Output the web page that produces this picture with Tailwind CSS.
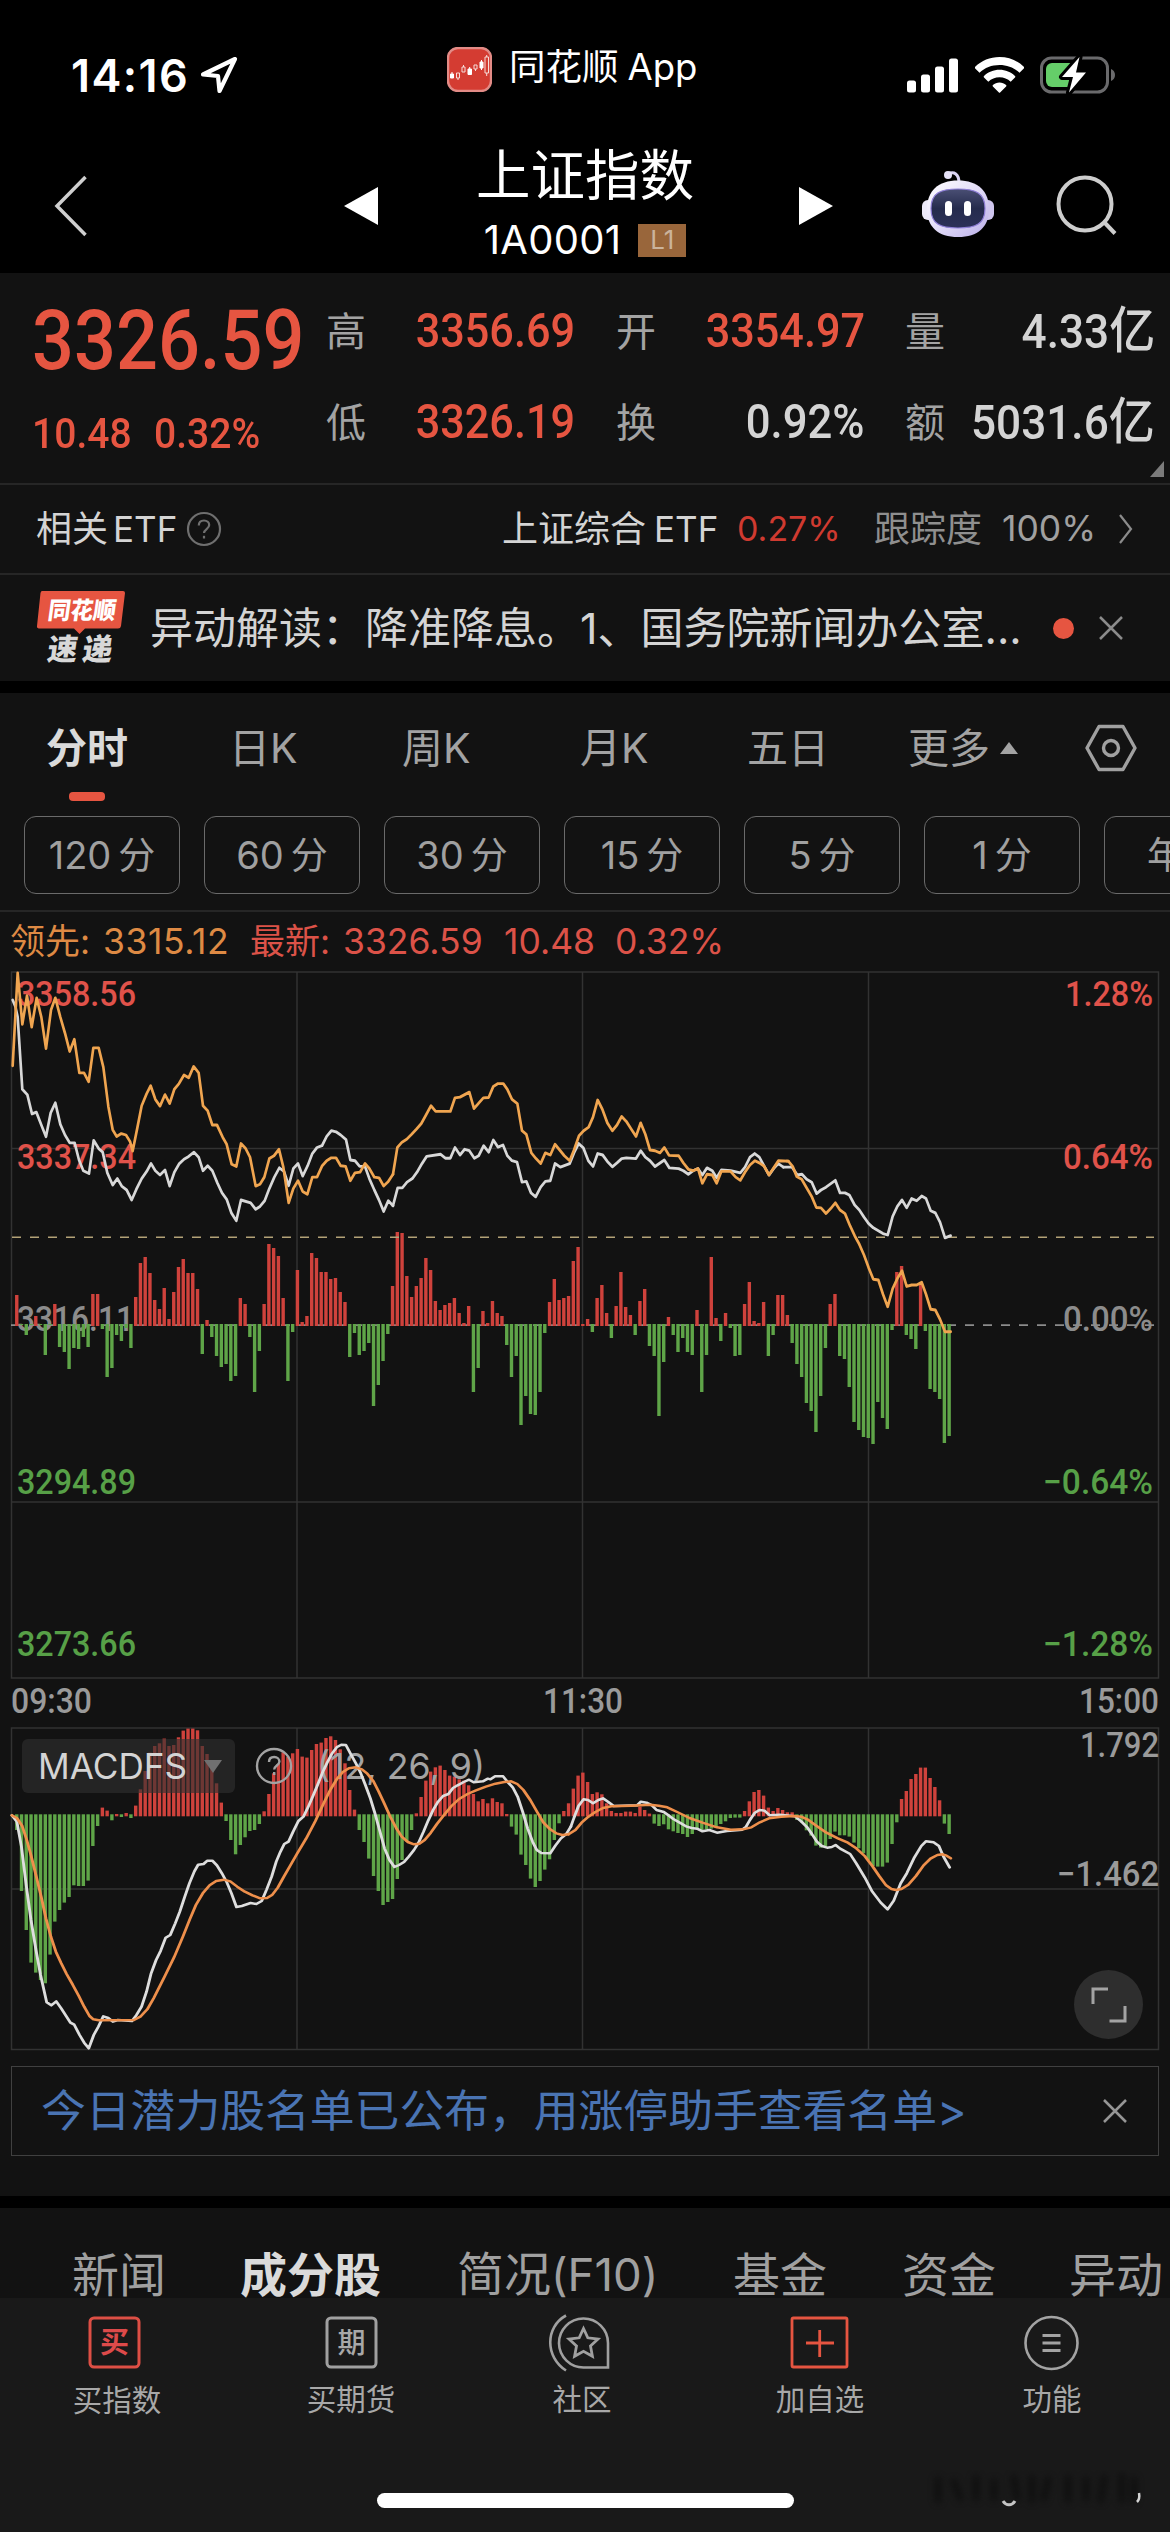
<!DOCTYPE html>
<html lang="zh-CN">
<head>
    <meta charset="UTF-8">
    <meta name="viewport" content="width=device-width, initial-scale=1.0">
    <title>上证指数 1A0001</title>
    <script src="https://cdn.jsdelivr.net/npm/@tailwindcss/browser@4"></script>
</head>
<body class="bg-black font-['Inter','Noto_Sans_CJK_SC',sans-serif] text-[#d4d4d4] antialiased">

<div class="w-[1170px] h-[2532px] flex flex-col overflow-hidden whitespace-nowrap leading-none">

    <!-- Status bar + navigation -->
    <header class="h-[273px] shrink-0 bg-black text-white">
        <div class="h-[138px] pt-[12px] flex items-center">
            <div class="w-[447px] pl-[71px] flex items-center gap-[12px]">
                <span class="text-[45px] font-semibold tracking-[1.400px] w-[117px]">14:16</span>
                <svg class="w-[38px] h-[38px]" viewBox="0 0 38 38" fill="none" stroke="#fff" stroke-width="4.2" stroke-linejoin="round"><path d="M35 3 3 18.5l15 1.5 1.5 15z"/></svg>
            </div>
            <div class="w-[460px] flex items-center gap-[17px] -mt-[12px]">
                <svg class="w-[45px] h-[45px]" viewBox="0 0 45 45">
                    <rect x="1" y="1" width="43" height="43" rx="10" fill="#d43c32" stroke="#e28b86" stroke-width="2.4"/>
                    <g fill="#fff" stroke="#fff" stroke-width="1"><path d="M3.500 27h3v4h-3zM21 22h3.500v5.500H21zM33 15h3v6h-3z"/><path d="M5 25v2M22.700 20v2M34.500 13v2M34.500 21v2"/></g>
                    <g fill="none" stroke="#f6dcd8" stroke-width="1"><path d="M9.500 26h3v5h-3zM15 20h3v5h-3zM27 18h3v4h-3zM38 10h3.500v16H38zM16.500 18v2M11 31v2M28.500 22v2M39.700 8v2M39.700 26v3"/></g>
                </svg>
                <span class="text-[36.500px] -mt-[3px]">同花顺<span class="ml-[9px]">App</span></span>
            </div>
            <div class="flex items-center gap-[16px]">
                <svg class="w-[52px] h-[35px]" viewBox="0 0 52 35" fill="#fff"><rect x="0" y="22.500" width="9" height="12" rx="2.500"/><rect x="14" y="16.500" width="9" height="18" rx="2.500"/><rect x="28" y="8.500" width="9" height="26" rx="2.500"/><rect x="42" y="0.500" width="9" height="34" rx="2.500"/></svg>
                <svg class="w-[49px] h-[36px]" viewBox="0 0 49 36" fill="#fff"><path d="M24.500 0C34 0 42.500 3.600 48.800 9.800a1.200 1.200 0 0 1 0 1.700l-4.300 4.300C39.300 10.700 32.300 8 24.500 8S9.700 10.700 4.500 15.800L.2 11.500a1.200 1.200 0 0 1 0-1.700C6.500 3.600 15 0 24.500 0z"/><path d="M24.500 12.700c6 0 11.400 2.300 15.500 6.200.5.500.5 1 0 1.600l-4.300 4.200c-3-2.800-6.900-4.400-11.200-4.400s-8.200 1.600-11.200 4.400L9 20.500c-.5-.6-.5-1.100 0-1.600 4.100-3.900 9.500-6.200 15.500-6.200z"/><path d="M24.500 25.500c2.500 0 4.800.9 6.600 2.400.5.500.5 1 0 1.500l-6 6.100c-.4.400-.8.400-1.200 0l-6-6.100c-.5-.5-.5-1 0-1.500 1.800-1.500 4.100-2.400 6.600-2.400z"/></svg>
                <svg class="w-[76px] h-[38px]" viewBox="0 0 76 38"><rect x="1.500" y="2" width="66" height="34" rx="10" fill="none" stroke="#6a6a6c" stroke-width="3"/><path d="M71 13c2.500 1 4 3.200 4 6s-1.500 5-4 6z" fill="#6a6a6c"/><path d="M12 7h24v24H12a6 6 0 0 1-6-6V13a6 6 0 0 1 6-6z" fill="#65ce69"/><path d="M39.500 1 22 21h11l-4 15.500L46 16.500H36z" fill="#fff" stroke="#000" stroke-width="6" stroke-linejoin="round" paint-order="stroke"/></svg>
            </div>
        </div>

        <div class="h-[135px] flex items-center">
            <svg class="w-[36px] h-[62px] ml-[53px] shrink-0" viewBox="0 0 36 62" fill="none" stroke="#cfcfcf" stroke-width="3.500"><path d="M32.500 2 4 31l28.500 29"/></svg>
            <svg class="w-[35px] h-[38px] ml-[255px] shrink-0" viewBox="0 0 35 38" fill="#fff"><path d="M0 19 34 0v38z"/></svg>
            <div class="w-[420px] pr-[8px] flex flex-col items-center shrink-0">
                <h1 class="text-[54.500px] leading-[66px] -mt-[6px] mb-[9px]">上证指数</h1>
                <div class="h-[46px] flex items-center gap-[17px]">
                    <span class="text-[40px] tracking-[0.300px]">1A0001</span>
                    <span class="w-[48px] h-[33px] bg-[#99663b] text-[#cbb39c] text-[26px] flex items-center justify-center">L1</span>
                </div>
            </div>
            <svg class="w-[35px] h-[38px] shrink-0" viewBox="0 0 35 38" fill="#fff"><path d="M34 19 0 0v38z"/></svg>
            <svg class="w-[74px] h-[70px] ml-[87px] mb-[3px] shrink-0" viewBox="0 0 74 70">
                <defs>
                    <linearGradient id="shell" x1="0" y1="0" x2="1" y2="1"><stop offset="0" stop-color="#fff"/><stop offset=".5" stop-color="#e2dcf8"/><stop offset="1" stop-color="#b9aee8"/></linearGradient>
                    <linearGradient id="face" x1="0" y1="0" x2="0" y2="1"><stop offset="0" stop-color="#4a4f74"/><stop offset=".5" stop-color="#252b4d"/><stop offset="1" stop-color="#2c3158"/></linearGradient>
                </defs>
                <path d="M27 5c6-3 11 0 11 9" fill="none" stroke="#d9d3f2" stroke-width="3"/><circle cx="27" cy="6" r="4" fill="#e6e2f7"/>
                <rect x="1" y="31" width="14" height="20" rx="6" fill="#ece9f8"/><rect x="59" y="31" width="14" height="20" rx="6" fill="#cfc6ee"/>
                <path d="M37 11.500C57 11.500 68 22 68 40S57 68 37 68 6 58 6 40s11-28.500 31-28.500z" fill="url(#shell)"/>
                <path d="M37 20c18 0 27 4 27 19.500S55 59 37 59 10 55 10 39.500 19 20 37 20z" fill="url(#face)" stroke="#8f7fd8" stroke-width="1.200"/>
                <rect x="24" y="32" width="7" height="15" rx="3.500" fill="#fff"/><rect x="43" y="32" width="7" height="15" rx="3.500" fill="#fff"/>
            </svg>
            <svg class="w-[62px] h-[62px] ml-[61px] shrink-0" viewBox="0 0 62 62" fill="none" stroke="#cdcdcd" stroke-width="4"><circle cx="29" cy="29" r="26.500"/><path d="m48 47 11 11.500"/></svg>
        </div>
    </header>

    <!-- Quote summary -->
    <section class="h-[210px] shrink-0 bg-[#121212] flex relative">
        <div class="w-[326px] pl-[32px] text-[#e65541] font-['Roboto'] font-medium">
            <div class="mt-[27px] text-[83px] leading-[82px] w-[300px] origin-left scale-x-[0.890]">3326.59</div>
            <div class="mt-[31px] flex text-[42px] leading-[42px] gap-[24px] origin-left scale-x-[0.930]"><span>10.48</span><span>0.32%</span></div>
        </div>
        <div class="flex-1 grid grid-cols-[290px_289px_250px] grid-rows-[91px_91px] pt-[12px] text-[48px] font-['Roboto','Noto_Sans_CJK_SC',sans-serif] font-medium">
            <div class="flex items-center justify-between pr-[41px]"><span class="text-[40px] font-normal text-[#a3a3a3] pt-[4px]">高</span><span class="text-[#e65541] origin-right scale-x-[0.900]">3356.69</span></div>
            <div class="flex items-center justify-between pr-[40px]"><span class="text-[40px] font-normal text-[#a3a3a3] pt-[4px]">开</span><span class="text-[#e65541] origin-right scale-x-[0.900]">3354.97</span></div>
            <div class="flex items-center justify-between"><span class="text-[40px] font-normal text-[#a3a3a3] pt-[4px]">量</span><span class="origin-right scale-x-[0.920]">4.33<span class="text-[50px]">亿</span></span></div>
            <div class="flex items-center justify-between pr-[41px]"><span class="text-[40px] font-normal text-[#a3a3a3] pt-[4px]">低</span><span class="text-[#e65541] origin-right scale-x-[0.900]">3326.19</span></div>
            <div class="flex items-center justify-between pr-[40px]"><span class="text-[40px] font-normal text-[#a3a3a3] pt-[4px]">换</span><span class="origin-right scale-x-[0.910]">0.92%</span></div>
            <div class="flex items-center justify-between"><span class="text-[40px] font-normal text-[#a3a3a3] pt-[4px]">额</span><span class="origin-right scale-x-[0.920]">5031.6<span class="text-[50px]">亿</span></span></div>
        </div>
        <svg class="absolute right-[6px] bottom-[6px] w-[14px] h-[16px]" viewBox="0 0 14 16" fill="#7b7b7b"><path d="M14 0v16H0z"/></svg>
    </section>

    <!-- Related ETF -->
    <section class="h-[90px] shrink-0 bg-[#121212] border-t-2 border-[#262626] flex items-center text-[34px] pl-[36px]">
        <span class="w-[150px]"><span class="text-[36px]">相关</span><span class="ml-[5px] text-[35px]">ETF</span></span>
        <svg class="w-[36px] h-[36px]" viewBox="0 0 36 36" fill="none" stroke="#6f6f6f" stroke-width="2.200"><circle cx="18" cy="18" r="16"/><path d="M12.800 14.500c0-3.200 2.200-5 5.200-5s5.200 1.900 5.200 4.600c0 3.900-5.200 4-5.200 8"/><path d="M18 24.800v2.700"/></svg>
        <span class="ml-[280px] w-[235px]"><span class="text-[36px]">上证综合</span><span class="ml-[8px] text-[35px]">ETF</span></span>
        <span class="w-[137px] text-[#cf3a30]">0.27%</span>
        <span class="w-[128px] text-[36px] text-[#8f8f8f]">跟踪度</span>
        <span class="w-[117px] text-[35.500px] text-[#a0a0a0]">100%</span>
        <svg class="w-[14px] h-[30px]" viewBox="0 0 14 30" fill="none" stroke="#8b8b8b" stroke-width="2.200"><path d="m1 1 11 14L1 29"/></svg>
    </section>

    <!-- News ticker -->
    <section class="h-[108px] shrink-0 bg-[#121212] border-t-2 border-[#262626] flex items-center">
        <svg class="w-[90px] h-[76px] ml-[36px] overflow-visible" viewBox="0 0 90 76">
            <path d="M6 1h81a2 2 0 0 1 2 2l-4 33a3 3 0 0 1-3 2.500H49L43.500 44 38 38.500H3A2 2 0 0 1 1 36L4.500 3Q5 1 6 1z" fill="#e65541"/>
            <g font-family="'Noto Sans CJK SC',sans-serif" font-weight="900" fill="#fff">
                <text x="15" y="29" font-size="24" textLength="68" lengthAdjust="spacingAndGlyphs" transform="skewX(-8)">同花顺</text>
                <text x="20" y="70" font-size="30" textLength="65" lengthAdjust="spacing" fill="#d8d8d8" transform="skewX(-8)">速递</text>
            </g>
        </svg>
        <span class="ml-[24px] w-[903px] text-[43px]">异动解读：降准降息。1、国务院新闻办公室...</span>
        <span class="w-[21px] h-[21px] rounded-full bg-[#e65541]"></span>
        <svg class="ml-[25px] w-[24px] h-[24px]" viewBox="0 0 24 24" stroke="#8b8b8b" stroke-width="2.500"><path d="m1 1 22 22M23 1 1 23"/></svg>
    </section>

    <!-- Period tabs -->
    <nav class="mt-[12px] h-[123px] shrink-0 bg-[#121212] relative text-[41px] text-[#a3a3a3]">
        <div class="h-[110px] flex items-center pl-[46px]">
            <span class="w-[183px] font-bold text-[#dadada]">分时</span>
            <span class="w-[173px]">日K</span>
            <span class="w-[178px]">周K</span>
            <span class="w-[167px]">月K</span>
            <span class="w-[161px]">五日</span>
            <span class="w-[92px]">更多</span>
            <svg class="w-[18px] h-[12px]" viewBox="0 0 18 12" fill="#a3a3a3"><path d="M9 0 18 12H0z"/></svg>
            <svg class="w-[52px] h-[48px] ml-[67px]" viewBox="0 0 52 48" fill="none" stroke="#a0a0a0" stroke-width="3.400"><path d="M14 2.500h24L50 24 38 45.500H14L2 24z" stroke-linejoin="round"/><circle cx="26" cy="24" r="7.500"/></svg>
        </div>
        <span class="absolute left-[69px] top-[99px] w-[36px] h-[9px] rounded-[4px] bg-[#e65541]"></span>
    </nav>

    <!-- Minute intervals -->
    <div class="h-[94px] shrink-0 bg-[#121212] flex gap-[24px] pl-[24px] text-[37px] text-[#a0a0a0]">
        <span class="w-[156px] h-[78px] shrink-0 border-[1.500px] border-[#6a6a6a] rounded-[12px] flex items-center justify-center gap-[7px] text-[38px]">120<i class="not-italic text-[37px]">分</i></span>
        <span class="w-[156px] h-[78px] shrink-0 border-[1.500px] border-[#6a6a6a] rounded-[12px] flex items-center justify-center gap-[7px] text-[38px]">60<i class="not-italic text-[37px]">分</i></span>
        <span class="w-[156px] h-[78px] shrink-0 border-[1.500px] border-[#6a6a6a] rounded-[12px] flex items-center justify-center gap-[7px] text-[38px]">30<i class="not-italic text-[37px]">分</i></span>
        <span class="w-[156px] h-[78px] shrink-0 border-[1.500px] border-[#6a6a6a] rounded-[12px] flex items-center justify-center gap-[7px] text-[38px]">15<i class="not-italic text-[37px]">分</i></span>
        <span class="w-[156px] h-[78px] shrink-0 border-[1.500px] border-[#6a6a6a] rounded-[12px] flex items-center justify-center gap-[7px] text-[38px]">5<i class="not-italic text-[37px]">分</i></span>
        <span class="w-[156px] h-[78px] shrink-0 border-[1.500px] border-[#6a6a6a] rounded-[12px] flex items-center justify-center gap-[7px] text-[38px]">1<i class="not-italic text-[37px]">分</i></span>
        <span class="w-[156px] h-[78px] shrink-0 border-[1.500px] border-[#6a6a6a] rounded-[12px] flex items-center pl-[42px]">年</span>
    </div>

    <!-- Chart legend -->
    <div class="h-[50px] shrink-0 bg-[#121212] border-t-2 border-[#262626] flex items-center pt-[11px] pl-[10px] text-[35.500px] text-[#dc5248]">
        <span class="w-[93px] text-[35px] text-[#de8a44]">领先:</span>
        <span class="w-[147px] tracking-[0.600px] text-[#de8a44]">3315.12</span>
        <span class="w-[93px] text-[35px]">最新:</span>
        <span class="w-[161px]">3326.59</span>
        <span class="w-[111px]">10.48</span>
        <span>0.32%</span>
    </div>

    <!-- Intraday chart, y axis in screen pixels from 960 -->
    <svg class="w-[1170px] h-[760px] shrink-0 bg-[#121212] overflow-visible" viewBox="0 960 1170 760" font-family="Roboto,sans-serif" font-size="35" font-weight="500">
        <g fill="none" stroke="#323232" stroke-width="1.500">
            <path d="M11.500 972H1158.500V1678H11.500zM11 1148.500H1159M11 1502H1159M297 972V1678M582.500 972V1678M868.500 972V1678"/>
        </g>
        <path d="M11 1325.200H1154" stroke="#8c8c8c" stroke-width="1.700" stroke-dasharray="9 9"/>
        <g fill="#e0524a">
            <text x="17" y="1006" textLength="119" lengthAdjust="spacingAndGlyphs">3358.56</text>
            <text x="17" y="1168.500" textLength="119" lengthAdjust="spacingAndGlyphs">3337.34</text>
            <text x="1153" y="1006" text-anchor="end" textLength="88" lengthAdjust="spacingAndGlyphs">1.28%</text>
            <text x="1153" y="1168.500" text-anchor="end" textLength="90" lengthAdjust="spacingAndGlyphs">0.64%</text>
        </g>
        <g fill="#8c8c8c">
            <text x="17" y="1331" textLength="117" lengthAdjust="spacingAndGlyphs">3316.11</text>
            <text x="1153" y="1331" text-anchor="end" textLength="90" lengthAdjust="spacingAndGlyphs">0.00%</text>
        </g>
        <g id="volumeBars"></g>
        <path d="M12 1237.200H1154" stroke="#b3a277" stroke-width="1.500" stroke-dasharray="9 9"/>
        <svg x="0" y="960" width="1170" height="720" viewBox="0 0 3510 2016" preserveAspectRatio="none" fill="none" stroke-linejoin="round" stroke-linecap="round" stroke-width="8">
            <g stroke="#d8d8d8">
                <polyline points="38,112 46,130 53,160 67,362 82,377 96,431 109,426 124,462 138,495 152,428 166,400 181,460 195,490 209,512 224,512 237,560 250,590 267,598 281,505 296,528 308,538 322,596 338,630 352,612 366,634 380,644 395,672 409,642 425,612 440,592 453,570 466,590 480,602 495,588 509,633 523,594 538,570 552,558 566,550 582,538 596,552 609,590 623,576 637,590 652,624 666,652 680,670 694,708 709,730 723,672 752,680 767,698 780,690 794,674 808,640 823,608 838,582 852,592 866,632 880,584 894,570 908,605 923,576 937,542 951,525 966,520 980,494 994,478 1008,481 1022,490 1038,503 1051,560 1065,562 1079,578 1095,578 1108,612 1123,644 1137,672 1151,704 1165,674 1179,688"/>
                <polyline transform="translate(1170)" points="9,688 23,638 37,638 51,622 67,612 81,594 96,570 110,550 152,544 166,555 181,555 195,525 210,546 224,530 238,534 253,555 266,548 281,520 296,538 310,504 324,524 339,518 352,548 366,562 381,566 396,622 409,620 423,652 437,663 452,636 466,620 481,618 495,570 511,580 539,570 552,540 566,514 580,526 595,562 609,578 623,542 638,546 652,564 667,579 681,568 695,556 709,554 738,556 752,534 766,552 780,562 795,578 823,560 838,582 866,584 880,590 895,600 909,590 924,584 937,602 951,582 967,590 980,610 994,588 1022,590 1051,596 1065,580 1080,552 1094,542 1108,552 1123,578 1137,602 1151,584 1165,570 1180,580"/>
                <polyline transform="translate(2340)" points="10,580 36,580 52,602 66,600 80,614 95,622 110,654 123,644 138,636 166,617 180,652 195,652 208,658 224,686 238,700 252,720 266,738 280,750 295,758 309,766 323,770 338,718 352,690 366,672 380,694 395,668 410,674 425,661 438,668 452,702 466,708 480,734 495,778 512,772"/>
            </g>
            <g stroke="#f0a550">
                <polyline points="38,296 53,36 67,180 81,100 95,188 110,106 124,160 138,248 153,140 166,106 181,160 195,205 209,256 223,222 238,316 252,316 266,341 280,246 296,246 310,300 325,410 338,475 350,494 364,486 378,490 390,508 398,535 412,470 425,408 440,374 452,352 466,390 480,409 495,377 509,402 523,362 537,346 552,322 566,330 581,298 596,316 609,408 623,422 637,462 651,462 668,496 680,516 695,572 709,578 723,514 737,528 750,552 767,633 780,628 793,608 808,556 822,548 837,530 850,580 866,680 880,640 894,618 908,648 922,656 937,608 951,608 966,577 980,562 994,554 1008,554 1022,576 1037,578 1051,618 1065,596 1080,594 1095,570 1108,584 1123,608 1137,610 1151,633 1165,620 1179,600"/>
                <polyline transform="translate(1170)" points="9,600 22,525 36,510 50,502 65,488 79,474 94,458 108,434 123,408 137,424 181,424 195,386 210,384 238,370 252,416 280,386 296,385 310,354 324,346 340,346 352,362 366,390 382,402 396,478 409,488 424,540 438,556 452,570 466,540 481,546 495,516 509,532 523,548 539,562 552,532 567,492 581,478 596,468 609,440 623,392 637,418 652,456 667,478 681,462 695,438 709,452 724,474 738,494 752,456 766,488 780,532 795,534 810,540 823,525 837,547 866,548 880,568 895,586 909,590 924,584 937,625 951,600 967,602 980,625 994,592 1022,592 1037,608 1051,617 1065,594 1080,574 1095,562 1108,568 1123,578 1137,602 1151,582 1165,562 1195,563"/>
                <polyline transform="translate(2340)" points="20,563 25,563 38,578 50,606 65,614 81,640 95,662 109,693 123,694 138,710 152,696 166,680 180,700 195,710 210,744 224,772 238,796 252,826 266,862 280,894 295,896 309,936 323,971 338,920 352,892 366,870 380,914 395,910 410,910 425,902 438,936 452,978 466,980 480,1006 495,1041 512,1041"/>
            </g>
        </svg>
        <g fill="#57a047">
            <text x="17" y="1493.500" textLength="119" lengthAdjust="spacingAndGlyphs">3294.89</text>
            <text x="17" y="1656" textLength="119" lengthAdjust="spacingAndGlyphs">3273.66</text>
            <text x="1153" y="1493.500" text-anchor="end" textLength="110" lengthAdjust="spacingAndGlyphs">−0.64%</text>
            <text x="1153" y="1656" text-anchor="end" textLength="110" lengthAdjust="spacingAndGlyphs">−1.28%</text>
        </g>
        <g fill="#9a9a9a">
            <text x="11" y="1713" textLength="81" lengthAdjust="spacingAndGlyphs">09:30</text>
            <text x="543" y="1713" textLength="80" lengthAdjust="spacingAndGlyphs">11:30</text>
            <text x="1159" y="1713" text-anchor="end" textLength="80" lengthAdjust="spacingAndGlyphs">15:00</text>
        </g>
    </svg>

    <!-- MACD indicator -->
    <div class="h-[340px] shrink-0 bg-[#121212] relative">
        <svg class="block w-[1170px] h-[340px]" viewBox="0 1720 1170 340" font-family="Roboto,sans-serif" font-size="35" font-weight="500">
            <path d="M11.500 1728H1158.500V2049.500H11.500zM11 1889H1159M297 1728V2049M582.500 1728V2049M868.500 1728V2049" fill="none" stroke="#323232" stroke-width="1.500"/>
            <g id="macdBars"></g>
            <rect x="22" y="1739" width="213" height="54" rx="6" fill="#313131" fill-opacity=".62"/>
            <g fill="#9a9a9a">
                <text x="1159" y="1757" text-anchor="end" textLength="79" lengthAdjust="spacingAndGlyphs">1.792</text>
                <text x="1159" y="1886" text-anchor="end" textLength="102" lengthAdjust="spacingAndGlyphs">−1.462</text>
            </g>
            <g font-family="Inter,sans-serif" font-weight="400">
                <text x="38" y="1779" font-size="35" fill="#d4d4d4" textLength="149" lengthAdjust="spacingAndGlyphs">MACDFS</text>
                <text x="317" y="1779" font-size="36" fill="#a3a3a3" textLength="168" lengthAdjust="spacingAndGlyphs">(12, 26, 9)</text>
            </g>
            <path d="M204 1760h18l-9 13z" fill="#707070"/>
            <g fill="none" stroke="#a3a3a3" stroke-width="2.400"><circle cx="274" cy="1766" r="17"/><path d="M269 1762c0-3.200 2.200-5 5.200-5s5.200 1.900 5.200 4.600c0 3.900-5.200 4-5.200 8M274.200 1772v3"/></g>
            <svg x="0" y="1660" width="1170" height="400" viewBox="0 0 3058 1200" preserveAspectRatio="none" fill="none" stroke-linejoin="round" stroke-linecap="round" stroke-width="7.500">
                <g stroke="#dedede">
                    <polyline points="31,466 44,485 56,560 69,680 81,780 94,870 106,945 122,1027 134,1036 147,1024 160,1045 184,1088 194,1094 208,1125 220,1148 232,1165 245,1125 257,1100 270,1069 283,1074 295,1085 308,1080 345,1083 356,1066 370,1040 383,995 395,940 408,900 420,872 433,833 445,825 458,790 470,755 483,710 495,670 508,634 518,614 532,612 542,602 555,602 567,616 580,640 592,665 605,700 618,741 632,738 655,729 670,732 684,723 697,688 710,650 722,605 733,575 743,552 754,545 766,515 780,483 793,470 805,442 818,408 830,375 842,340 855,308 868,280 880,262 892,254 904,255 918,285 930,310 943,340 955,375 968,415 980,460 992,510 1005,565 1018,600 1031,621 1043,615 1056,606 1068,590 1082,570 1094,548 1107,515 1119,482 1132,450 1145,425 1158,408 1172,402 1184,384 1196,376 1212,366 1226,359 1238,367 1262,364 1275,356 1282,358 1294,349 1315,349 1326,365 1340,382 1353,410 1366,455 1379,505 1392,545 1403,570 1415,579 1438,580 1452,556 1466,535 1480,522 1492,500"/>
                    <polyline transform="translate(1490)" points="2,500 10,474 22,438 35,418 47,420 60,430 74,420 86,415 100,426 114,438 175,436 185,425 200,428 214,436 226,450 245,456 257,466 270,477 290,490 305,500 318,504 332,506 346,514 364,510 384,518 410,513 450,509 460,500 470,480 483,458 495,450 508,452 522,466 548,464 588,469 604,484 620,502 632,522 645,545 658,558 672,563 684,561 694,555 706,566 732,582 748,610 770,652 790,695 812,728 830,748 846,722 864,670 880,640 900,592 918,558 930,544 950,547 964,558 976,590 992,622"/>
                </g>
                <g stroke="#ee8f4b">
                    <polyline points="31,466 44,474 58,498 70,540 82,590 95,650 108,712 120,775 133,830 146,875 160,910 174,942 190,974 206,1008 220,1040 234,1068 244,1078 258,1081 350,1080 368,1069 385,1048 402,1014 430,950 455,892 478,830 496,778 512,735 530,700 548,676 565,663 585,659 602,664 620,680 640,695 660,706 680,715 698,714 712,704 726,683 742,650 758,618 776,582 800,536 824,484 846,430 864,388 880,358 896,336 912,325 930,322 946,328 960,341 976,364 990,395 1005,432 1020,470 1036,505 1050,530 1066,546 1082,553 1096,551 1110,540 1126,518 1142,492 1160,466 1180,438 1200,417 1222,402 1244,391 1270,380 1295,371 1318,366 1336,364 1352,372 1368,390 1386,420 1404,456 1420,487 1438,508 1454,520 1470,525 1486,523"/>
                    <polyline transform="translate(1490)" points="-4,523 14,510 30,488 48,470 66,456 86,444 108,439 160,437 210,434 232,437 254,442 280,456 312,474 346,488 384,502 420,509 452,508 474,502 496,487 520,475 552,470 586,468 604,470 620,478 640,494 670,518 700,535 726,548 748,565 770,588 790,618 808,648 826,676 840,687 852,690 866,687 884,674 904,648 924,616 942,596 960,585 974,583 984,587 995,595"/>
                </g>
            </svg>
        </svg>
        <button class="absolute left-[1074px] top-[250px] w-[69px] h-[69px] rounded-full bg-[#2e2e2e] flex items-center justify-center">
            <svg class="w-[36px] h-[36px]" viewBox="0 0 36 36" fill="none" stroke="#a3a3a3" stroke-width="3"><path d="M2 17V2h15M34 19v15H18.500"/></svg>
        </button>
    </div>

    <!-- Promo link -->
    <section class="h-[136px] shrink-0 bg-[#121212] pt-[6px] px-[11px]">
        <div class="h-[90px] border-[1.500px] border-[#404040] flex items-center pl-[29px] text-[#4a74b3]">
            <span class="w-[1062px] shrink-0 text-[44.800px]">今日潜力股名单已公布，用涨停助手查看名单&gt;</span>
            <svg class="w-[24px] h-[24px] shrink-0" viewBox="0 0 24 24" stroke="#969696" stroke-width="2.500"><path d="m1 1 22 22M23 1 1 23"/></svg>
        </div>
    </section>

    <!-- Detail tabs -->
    <nav class="mt-[12px] h-[90px] shrink-0 bg-[#121212] flex items-center pt-[42px] pl-[72px] text-[47px] text-[#a0a0a0]">
        <span class="w-[168px] shrink-0">新闻</span>
        <span class="w-[217px] shrink-0 font-bold text-[#dadada]">成分股</span>
        <span class="w-[276px] shrink-0">简况<span class="text-[45.500px]">(F10)</span></span>
        <span class="w-[169px] shrink-0">基金</span>
        <span class="w-[167px] shrink-0">资金</span>
        <span class="shrink-0">异动</span>
    </nav>

    <!-- Bottom bar -->
    <footer class="h-[234px] shrink-0 bg-[#191919] relative text-[29.500px] text-[#a8a8a8]">
        <div class="flex pt-[15px] pl-[34px]">
            <div class="w-[166px] flex flex-col items-center gap-[12px]">
                <svg class="w-[60px] h-[60px] -ml-[6px]" viewBox="0 0 60 60"><rect x="6" y="5" width="49" height="49" rx="4" fill="none" stroke="#dd4f45" stroke-width="3"/><text x="30.500" y="40" font-size="29" font-weight="700" text-anchor="middle" fill="#dd4a4a" font-family="'Noto Sans CJK SC',sans-serif">买</text></svg>
                <span class="mt-px">买指数</span>
            </div>
            <div class="ml-[68px] w-[166px] flex flex-col items-center gap-[12px]">
                <svg class="w-[60px] h-[60px]" viewBox="0 0 60 60"><rect x="6" y="5" width="49" height="49" rx="4" fill="none" stroke="#a0a0a0" stroke-width="3"/><text x="30.500" y="40" font-size="28" font-weight="500" text-anchor="middle" fill="#a8a8a8" font-family="'Noto Sans CJK SC',sans-serif">期</text></svg>
                <span>买期货</span>
            </div>
            <div class="ml-[65px] w-[166px] flex flex-col items-center gap-[12px]">
                <svg class="w-[62px] h-[60px] -ml-[6px]" viewBox="0 0 62 60" fill="none" stroke="#a0a0a0" stroke-width="2.600"><path d="M18 2.500C-3 14-3 44 18 57.500"/><path d="M36 54.500h24V30a24.500 24.500 0 1 0-24 24.500z"/><path d="m35.500 15.500 4.300 9.300 10.200 1.300-7.500 7 1.900 10.200-8.900-5-8.900 5 1.900-10.200-7.500-7 10.200-1.300z" stroke-width="2.800"/></svg>
                <span>社区</span>
            </div>
            <div class="ml-[72px] w-[166px] flex flex-col items-center gap-[12px]">
                <svg class="w-[60px] h-[60px]" viewBox="0 0 60 60" fill="none" stroke="#e65541" stroke-width="2.800"><rect x="2" y="5" width="55" height="49" rx="1.500"/><path d="M16 30h28M29.700 17v27"/></svg>
                <span>加自选</span>
            </div>
            <div class="ml-[66px] w-[166px] flex flex-col items-center gap-[12px]">
                <svg class="w-[60px] h-[60px]" viewBox="0 0 60 60" fill="none" stroke="#a3a3a3" stroke-width="2.600"><circle cx="29.500" cy="30" r="26"/><path d="M20.500 22.500h18M20.500 30h18M20.500 37.500h18" stroke-width="3"/></svg>
                <span>功能</span>
            </div>
        </div>
        <span class="absolute left-[377px] top-[195px] w-[417px] h-[15px] rounded-full bg-white"></span>
        <!-- erased corner mark -->
        <svg class="absolute left-[926px] top-[172px] w-[220px] h-[42px]" viewBox="0 0 220 42">
            <g class="blur-[3px]" fill="none" stroke="#0e0e0e" stroke-width="7" opacity=".8" stroke-linecap="round"><path d="M12 10v20M28 12l6 16M50 8v20M68 12v16M88 8l3 20M106 8v22M122 10l-4 18M142 8v22M160 10v18M178 8l-3 22M196 6v24M208 10v20"/></g>
            <path d="M77 31c3 5 9 5 12 0" fill="none" stroke="#c4c4c4" stroke-width="3"/><path d="M213 23c1 5 0 7-2 9" fill="none" stroke="#d4d4d4" stroke-width="2.500"/>
        </svg>
    </footer>
</div>

<script>
    // one value per minute, in px above (+) or below (-) the zero line
    const volume = [0,30,0,-10,0,9,0,-30,0,21,-22,-27,-44,-23,-24,-12,-22,31,31,-4,-52,-43,-10,-16,-3,-23,28,62,68,52,25,16,37,6,33,58,66,52,52,36,
        -29,5,-12,-31,-42,-39,-56,-51,27,21,-12,-67,-26,21,81,77,69,27,-56,-7,55,3,9,72,67,53,53,46,47,33,23,-32,-8,-30,-26,-18,-81,-60,-36,-9,
        39,93,92,49,28,39,47,67,55,24,15,20,22,27,12,2,19,-67,-43,14,2,24,12,9,-20,-52,-31,-100,-71,-89,-90,-67,-8,23,46,25,27,29,64,78,
        1,6,-7,27,40,12,-13,19,53,18,10,-10,24,36,-21,-31,-91,-37,8,-10,-27,-13,-27,-30,15,-67,-30,68,7,-16,12,-3,-31,-30,21,43,4,2,23,-31,
        -10,30,30,10,-18,-39,-52,-78,-86,-107,-71,-23,21,31,-31,-34,-62,-97,-105,-112,-113,-119,-77,-93,-104,-5,53,59,-10,-14,-24,41,-6,-64,-67,-74,-118,-111];

    // MACD histogram, thirds of a px
    const macd = [0,-44,-227,-344,-442,-472,-494,-504,-418,-319,-284,-262,-245,-210,-212,-212,-196,-92,-32,23,14,-15,4,-5,7,-8,29,78,133,188,208,216,230,208,211,234,254,260,260,255,
        208,184,148,96,38,-17,-74,-117,-89,-66,-47,-44,-26,12,64,126,154,189,176,186,199,176,173,196,214,218,232,237,226,198,156,76,17,-44,-80,-130,-182,-227,-269,-260,
        -251,-191,-134,-79,-44,6,55,104,131,144,149,136,119,116,108,104,90,64,42,49,36,51,40,36,4,-34,-58,-118,-149,-190,-215,-197,-163,-132,-74,-24,13,36,80,119,
        128,100,64,69,63,36,13,7,7,11,11,7,26,16,5,-25,-32,-27,-42,-48,-53,-56,-65,-56,-39,-44,-42,-40,-36,-26,-18,-8,-7,-7,13,42,70,76,59,23,
        13,22,16,9,9,-14,-22,-45,-61,-91,-97,-92,-71,-49,-60,-60,-64,-82,-99,-114,-134,-152,-154,-154,-142,-86,-21,49,73,109,124,143,143,112,85,45,-25,-56];

    function drawBars(id, values, zero, scale) {
        let out = '';
        values.forEach((v, i) => {
            if (i === 0) return;
            const h = Math.abs(v) * scale;
            const x = 12 + 4.757 * i - 1.7;
            const y = v > 0 ? zero - h : zero - 1;
            out += `<rect x="${x.toFixed(2)}" y="${y.toFixed(1)}" width="3.4" height="${(h + 1).toFixed(1)}" fill="${v > 0 ? '#cf423c' : '#5fa548'}"/>`;
        });
        document.getElementById(id).innerHTML = out;
    }

    drawBars('volumeBars', volume, 1325, 1);
    drawBars('macdBars', macd, 1815.3, 1 / 3);
</script>

</body>
</html>
